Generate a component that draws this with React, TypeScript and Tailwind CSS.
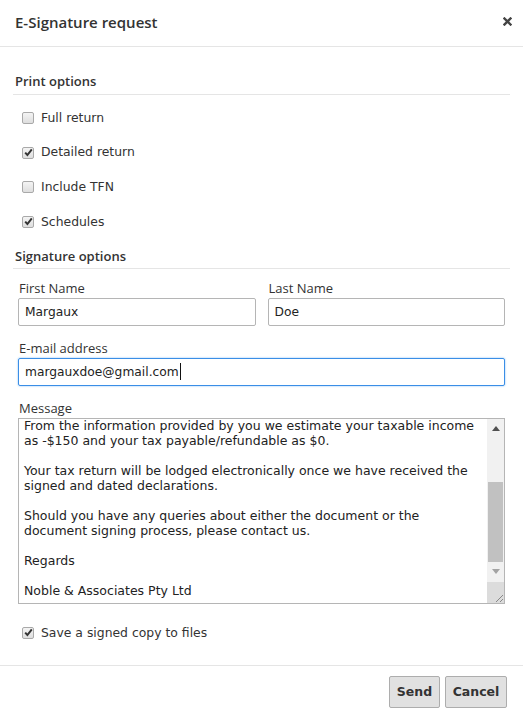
import React from 'react';

const sans = { fontFamily: '"Open Sans", "DejaVu Sans", sans-serif' };
const verdana = { fontFamily: '"DejaVu Sans", Verdana, sans-serif' };

const Checkbox: React.FC<{ checked?: boolean; label: string }> = ({ checked, label }) => (
    <div className="flex items-center h-[20px]">
        <span className="ml-[22px] w-[12px] h-[12px] rounded-[2px] border border-[#a9a9a9] bg-gradient-to-b from-[#f4f4f4] to-[#dedede] flex items-center justify-center">
            {checked && (
                <svg width="9" height="9" viewBox="0 0 9 9">
                    <path d="M1.2 4.6 L3.4 7 L7.8 1.4" fill="none" stroke="#333" strokeWidth="2" />
                </svg>
            )}
        </span>
        <span className="ml-[7px] text-[12.4px] text-[#333]" style={verdana}>{label}</span>
    </div>
);

const SectionTitle: React.FC<{ title: string; pad: string }> = ({ title, pad }) => (
    <div className={`mx-[13px] border-b border-[#e5e5e5] pl-[2px] text-[13px] leading-[20px] font-semibold text-[#333] ${pad}`} style={sans}>
        {title}
    </div>
);

const FieldLabel: React.FC<{ text: string }> = ({ text }) => (
    <div className="text-[13px] leading-[18px] text-[#333] pl-[1px]" style={sans}>{text}</div>
);

const lines = [
    'From the information provided by you we estimate your taxable income',
    'as -$150 and your tax payable/refundable as $0.',
    '',
    'Your tax return will be lodged electronically once we have received the',
    'signed and dated declarations.',
    '',
    'Should you have any queries about either the document or the',
    'document signing process, please contact us.',
    '',
    'Regards',
    '',
    'Noble & Associates Pty Ltd',
];

export default function App() {
    return (
        <div className="w-[523px] h-[710px] bg-white text-[#333] overflow-hidden">
            {/* Header */}
            <div className="h-[47px] border-b border-[#e5e5e5] flex items-center justify-between pl-[15px] pr-[11px]">
                <span className="text-[15px] font-semibold text-[#333] mt-[-2px]" style={sans}>E-Signature request</span>
                <svg width="9" height="9" viewBox="0 0 9 9" className="mt-[-4px]">
                    <path d="M1.5 1.5 L7.5 7.5 M7.5 1.5 L1.5 7.5" stroke="#444" strokeWidth="2.4" strokeLinecap="square" />
                </svg>
            </div>

            {/* Body */}
            <div className="pt-[24px]">
                <SectionTitle title="Print options" pad="pb-[3px]" />
                <div className="flex flex-col gap-[14.67px] pt-[13px] pb-[14px]">
                    <Checkbox label="Full return" />
                    <Checkbox checked label="Detailed return" />
                    <Checkbox label="Include TFN" />
                    <Checkbox checked label="Schedules" />
                </div>
                <SectionTitle title="Signature options" pad="pb-[2px]" />

                <div className="px-[18px] pt-[10px]">
                    <div className="grid grid-cols-2 gap-[12px]">
                        <div>
                            <FieldLabel text="First Name" />
                            <div className="mt-[1px] h-[28px] border border-[#b5b5b5] rounded-[2px] flex items-center px-[6px] text-[12.25px] text-[#222]" style={verdana}>Margaux</div>
                        </div>
                        <div>
                            <FieldLabel text="Last Name" />
                            <div className="mt-[1px] h-[28px] border border-[#b5b5b5] rounded-[2px] flex items-center px-[6px] text-[12.25px] text-[#222]" style={verdana}>Doe</div>
                        </div>
                    </div>

                    <div className="mt-[13px]">
                        <FieldLabel text="E-mail address" />
                        <div className="mt-[1px] h-[28px] border border-[#3a8ee6] rounded-[2px] shadow-[0_0_2px_#7ab8f5] flex items-center px-[6px] text-[12.25px] text-[#222]" style={verdana}>
                            margauxdoe@gmail.com<span className="w-px h-[17px] bg-[#111] ml-[1px]" />
                        </div>
                    </div>

                    <div className="mt-[13px]">
                        <FieldLabel text="Message" />
                        <div className="mt-[1px] h-[186px] border border-[#b5b5b5] flex overflow-hidden">
                            <div className="flex-1 pl-[5px] mt-[-1px] text-[12.5px] leading-[15px] text-[#222] overflow-hidden" style={verdana}>
                                {lines.map((l, i) => (
                                    <div key={i} className="h-[15px] whitespace-pre">{l || ' '}</div>
                                ))}
                            </div>
                            {/* Scrollbar */}
                            <div className="w-[17px] bg-[#f1f1f1] flex flex-col">
                                <div className="h-[20px] flex items-center justify-center">
                                    <svg width="8" height="5" viewBox="0 0 8 5"><path d="M0 5 L4 0 L8 5 Z" fill="#505050" /></svg>
                                </div>
                                <div className="h-[43px]" />
                                <div className="mx-[1px] h-[80px] bg-[#c1c1c1]" />
                                <div className="h-[20px] flex items-center justify-center">
                                    <svg width="8" height="5" viewBox="0 0 8 5"><path d="M0 0 L4 5 L8 0 Z" fill="#a3a3a3" /></svg>
                                </div>
                                <div className="flex-1 bg-[#dcdcdc] flex items-end justify-end">
                                    <svg width="10" height="10" viewBox="0 0 10 10">
                                        <path d="M9 2 L2 9 M9 6 L6 9" stroke="#888" strokeWidth="1" />
                                    </svg>
                                </div>
                            </div>
                        </div>
                    </div>
                </div>

                <div className="pt-[19px] pb-[22px]">
                    <Checkbox checked label="Save a signed copy to files" />
                </div>
            </div>

            {/* Footer */}
            <div className="border-t border-[#e5e5e5] flex justify-end gap-[5px] pt-[10px] pr-[16px]">
                <button className="h-[32px] w-[51px] border border-[#adadad] rounded-[2px] bg-[#e1e1e1] text-[12.5px] font-bold text-[#333]" style={verdana}>Send</button>
                <button className="h-[32px] w-[62px] border border-[#adadad] rounded-[2px] bg-[#e1e1e1] text-[12.5px] font-bold text-[#333]" style={verdana}>Cancel</button>
            </div>
        </div>
    );
}
